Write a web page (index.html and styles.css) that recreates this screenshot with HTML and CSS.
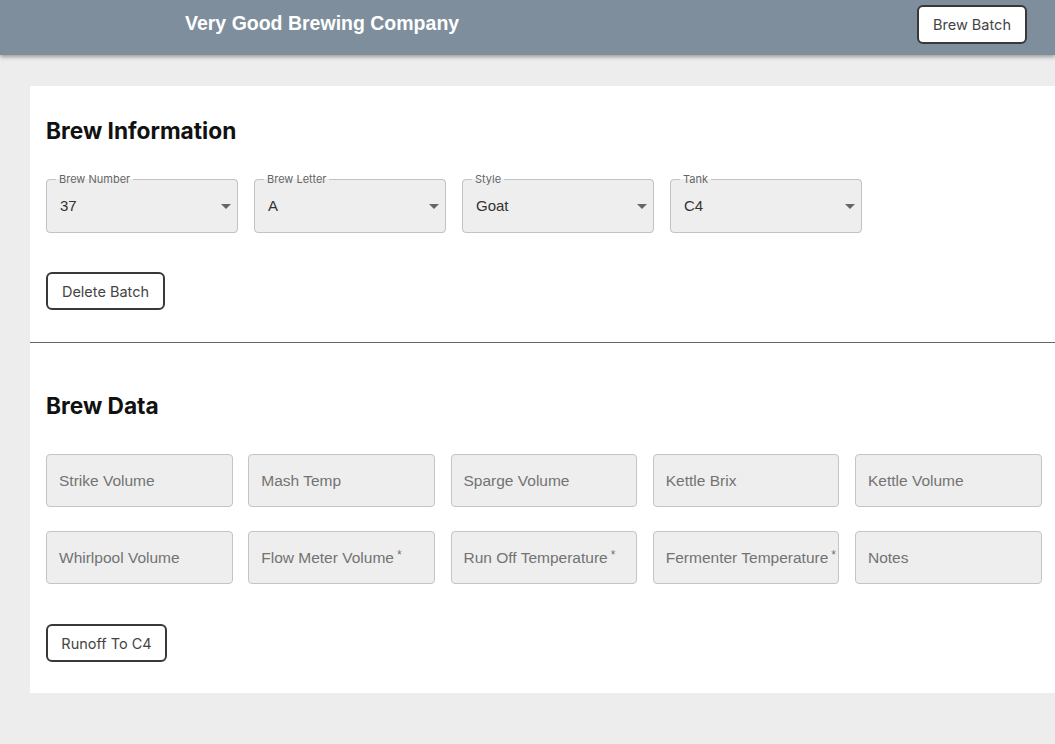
FILE: index.html
```html
<!DOCTYPE html>
<html>
<head>
<meta charset="utf-8">
<link rel="stylesheet" href="styles.css">
</head>
<body>
<header class="topbar">
  <div class="brand">Very Good Brewing Company</div>
  <button class="btn btn-top">Brew Batch</button>
</header>
<main class="card">
  <section class="info">
    <h2 class="section-title">Brew Information</h2>
    <div class="select-row">
      <fieldset class="select">
        <legend>Brew Number</legend>
        <span class="value">37</span>
        <span class="caret"></span>
      </fieldset>
      <fieldset class="select">
        <legend>Brew Letter</legend>
        <span class="value">A</span>
        <span class="caret"></span>
      </fieldset>
      <fieldset class="select">
        <legend>Style</legend>
        <span class="value">Goat</span>
        <span class="caret"></span>
      </fieldset>
      <fieldset class="select">
        <legend>Tank</legend>
        <span class="value">C4</span>
        <span class="caret"></span>
      </fieldset>
    </div>
    <button class="btn btn-delete">Delete Batch</button>
  </section>
  <hr class="divider">
  <section class="data">
    <h2 class="section-title">Brew Data</h2>
    <div class="input-grid">
      <div class="field">Strike Volume</div>
      <div class="field">Mash Temp</div>
      <div class="field">Sparge Volume</div>
      <div class="field">Kettle Brix</div>
      <div class="field">Kettle Volume</div>
      <div class="field">Whirlpool Volume</div>
      <div class="field">Flow Meter Volume<span class="req">*</span></div>
      <div class="field">Run Off Temperature<span class="req">*</span></div>
      <div class="field">Fermenter Temperature<span class="req">*</span></div>
      <div class="field">Notes</div>
    </div>
    <button class="btn btn-runoff">Runoff To C4</button>
  </section>
</main>
</body>
</html>
```
FILE: styles.css
```css
html, body {
  margin: 0;
  padding: 0;
}
body {
  background: #ededed;
  font-family: "Liberation Sans", Arial, sans-serif;
  width: 1055px;
  height: 744px;
  overflow: hidden;
}
.topbar {
  height: 55px;
  background: #7e8e9c;
  box-shadow: 0 2px 4px rgba(0, 0, 0, 0.35);
  display: flex;
  align-items: center;
  justify-content: space-between;
  padding: 0 28px 0 185px;
  box-sizing: border-box;
  position: relative;
}
.brand {
  color: #ffffff;
  font-weight: bold;
  font-size: 19.5px;
  margin-top: -9px;
}
.btn {
  font-family: Inter, "Liberation Sans", sans-serif;
  font-size: 14.5px;
  color: #444;
  background: #fff;
  border: 2px solid #383838;
  border-radius: 6px;
  padding: 0 16px;
  height: 38px;
  cursor: pointer;
}
.btn-top {
  height: 39px;
  margin-top: -7px;
  width: 110px;
  padding: 0;
}
.card {
  margin: 31px 0 0 30px;
  background: #fff;
  padding: 25px 0 30px 16px;
  height: 607px;
  box-sizing: border-box;
}
.section-title {
  font-family: Inter, "Liberation Sans", sans-serif;
  font-weight: 700;
  font-size: 22.7px;
  color: #111;
  margin: 0;
  line-height: 40px;
}
.select-row {
  display: flex;
  gap: 16px;
  margin-top: 22px;
}
.select {
  margin: 0;
  width: 192px;
  height: 60px;
  box-sizing: border-box;
  border: 1px solid #c2c2c2;
  border-radius: 4px;
  background: #eeeeee;
  padding: 0 6px 0 13px;
  display: flex;
  align-items: center;
  justify-content: space-between;
  min-width: 0;
}
.select legend {
  font-family: Inter, "Liberation Sans", sans-serif;
  font-size: 11px;
  color: #666;
  padding: 0 3px;
  margin-left: -4px;
  line-height: 13px;
}
.value {
  font-size: 15px;
  color: #333;
  margin-top: -8px;
}
.caret {
  width: 0;
  height: 0;
  border-left: 5px solid transparent;
  border-right: 5px solid transparent;
  border-top: 5px solid #666;
  margin-top: -6px;
}
.btn-delete {
  margin-top: 39px;
  width: 119px;
  padding: 0;
}
.divider {
  border: 0;
  border-top: 1.5px solid #666;
  margin: 32px 0 0 -16px;
}
.data {
  padding-top: 43px;
}
.input-grid {
  display: grid;
  grid-template-columns: repeat(5, 186.5px);
  column-gap: 15.75px;
  row-gap: 24px;
  margin-top: 28px;
}
.field {
  height: 53px;
  box-sizing: border-box;
  border: 1px solid #c4c4c4;
  border-radius: 4px;
  background: #eeeeee;
  color: #737373;
  font-size: 15.5px;
  display: flex;
  align-items: center;
  padding-left: 12px;
  white-space: nowrap;
  overflow: hidden;
}
.req {
  font-size: 12px;
  margin-left: 3px;
  align-self: center;
  margin-top: -5px;
}
.btn-runoff {
  margin-top: 40px;
  width: 121px;
  padding: 0;
}
```
